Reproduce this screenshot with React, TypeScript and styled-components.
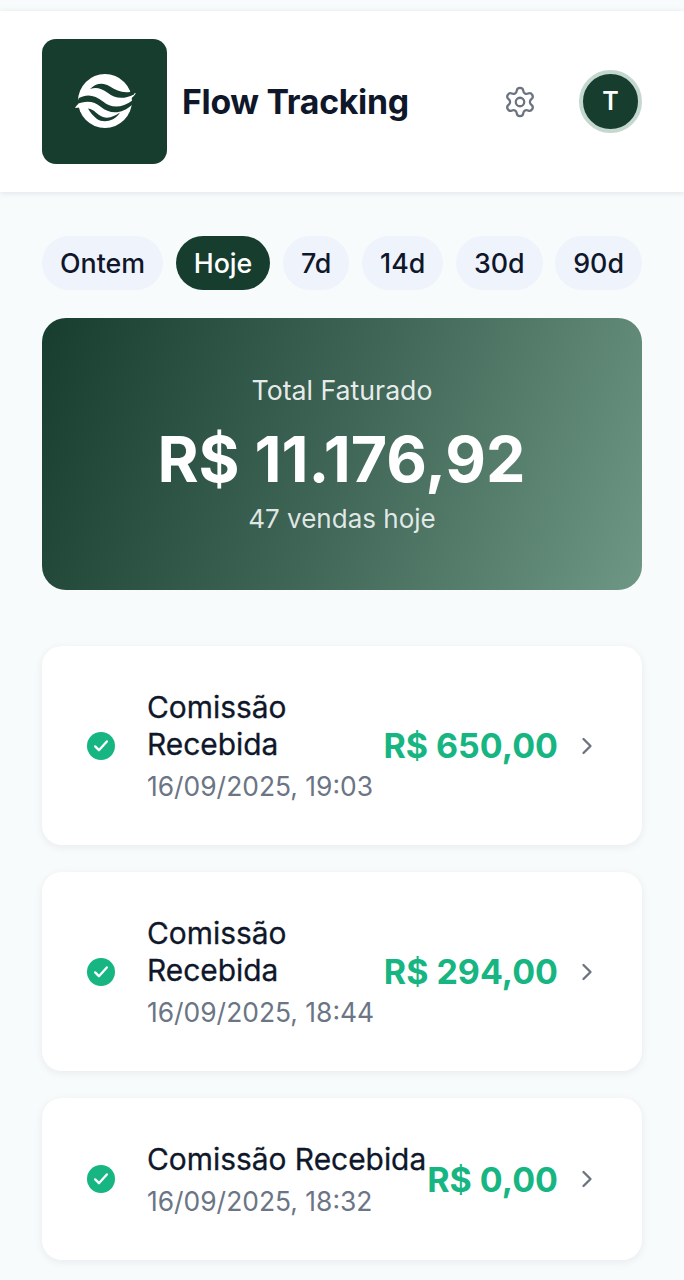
import React from "react";
import styled, { createGlobalStyle } from "styled-components";
import { Settings, ChevronRight } from "lucide-react";

const Global = createGlobalStyle`
  html, body { margin: 0; padding: 0; background: #f8fbfc; }
  body { font-family: Inter, "Liberation Sans", sans-serif; -webkit-font-smoothing: antialiased; }
`;

const Page = styled.div`
  width: 684px;
  height: 1280px;
  overflow: hidden;
  padding-top: 11px;
  box-sizing: border-box;
  background: #f8fbfc;
`;

const Header = styled.header`
  height: 181px;
  box-sizing: border-box;
  padding: 28px 42px 28px;
  background: #fff;
  display: flex;
  align-items: center;
  box-shadow: 0 1px 6px rgba(15, 23, 42, 0.1);
`;

const LogoTile = styled.div`
  width: 125px;
  height: 125px;
  border-radius: 14px;
  background: #163d2e;
  display: flex;
  align-items: center;
  justify-content: center;
  flex: none;
`;

const Brand = styled.h1`
  margin: 0 0 0 15px;
  font-size: 33.8px;
  line-height: 40px;
  font-weight: 700;
  letter-spacing: -0.3px;
  color: #0f172a;
  flex: 1;
`;

const GearButton = styled.div`
  width: 34px;
  height: 34px;
  display: flex;
  align-items: center;
  justify-content: center;
  color: #6b7280;
  margin-right: 42px;
`;

const Avatar = styled.div`
  width: 55px;
  height: 55px;
  border-radius: 50%;
  background: #163d2e;
  border: 4px solid #c5d8cf;
  color: #fff;
  font-size: 25px;
  font-weight: 600;
  display: flex;
  align-items: center;
  justify-content: center;
  flex: none;
  margin-top: -1px;
`;

const Main = styled.main`
  padding: 44px 42px 0;
`;

const Pills = styled.div`
  display: flex;
  justify-content: space-between;
`;

const Pill = styled.div<{ $active?: boolean }>`
  height: 54px;
  padding: 0 18px;
  border-radius: 27px;
  display: flex;
  align-items: center;
  font-size: 26.8px;
  font-weight: 500;
  background: ${(p) => (p.$active ? "#163d2e" : "#eff3fc")};
  color: ${(p) => (p.$active ? "#fff" : "#0f172a")};
`;

const Hero = styled.section`
  margin-top: 28px;
  height: 272px;
  border-radius: 24px;
  background: linear-gradient(110deg, #163d2e 0%, #3f6656 50%, #6f9785 100%);
  color: #fff;
  display: flex;
  flex-direction: column;
  align-items: center;
  justify-content: center;
`;

const HeroLabel = styled.div`
  font-size: 26.7px;
  line-height: 32px;
  color: rgba(255, 255, 255, 0.9);
`;

const HeroValue = styled.div`
  font-size: 62.7px;
  line-height: 76px;
  font-weight: 700;
  margin-top: 15px;
  margin-left: -1px;
`;

const HeroSub = styled.div`
  font-size: 26px;
  line-height: 32px;
  color: rgba(255, 255, 255, 0.85);
  margin-top: 6px;
`;

const List = styled.div`
  margin-top: 56px;
  display: flex;
  flex-direction: column;
  gap: 27px;
`;

const Card = styled.article`
  box-sizing: border-box;
  padding: 43px 45px 38px 45px;
  background: #fff;
  border-radius: 20px;
  box-shadow: 0 2px 8px rgba(15, 23, 42, 0.07);
  display: flex;
  align-items: center;
`;

const StatusDot = styled.div`
  width: 28px;
  height: 28px;
  border-radius: 50%;
  background: #17b582;
  color: #fff;
  display: flex;
  align-items: center;
  justify-content: center;
  flex: none;
  margin-top: -5px;
`;

const Info = styled.div`
  margin-left: 32px;
  flex: 1;
  min-width: 0;
`;

const Title = styled.div`
  font-size: 29.9px;
  line-height: 37px;
  font-weight: 400;
  color: #0f172a;
  white-space: nowrap;
  -webkit-text-stroke: 0.3px #0f172a;
`;

const DateText = styled.div`
  font-size: 26.4px;
  line-height: 41px;
  margin-top: 3px;
  color: #6b7585;
  white-space: nowrap;
`;

const Amount = styled.div`
  font-size: 34px;
  font-weight: 700;
  color: #17b582;
  white-space: nowrap;
  margin-top: -5px;
`;

const Chevron = styled.div`
  width: 28px;
  margin-left: 15px;
  margin-right: -4px;
  margin-top: -5px;
  display: flex;
  justify-content: center;
  color: #6b7280;
`;

const Logo = () => (
  <svg width="80" height="80" viewBox="0 0 80 80" aria-label="logo">
    <circle cx="40" cy="39" r="27" fill="#fff" />
    <path d="M10 46 C14 39 22 36 30 40 L20 45 Z" fill="#fff" />
    <path d="M71 31 C66 39 58 41 50 38 L62 34 Z" fill="#fff" />
    <path d="M25 27 C31 21 38 20 45 24.5 C52 29 59 32 69 29 L69 32.5 C57 38.5 49 35.5 43 31 C36 26 31 25 25 27 Z" fill="#163d2e" />
    <path d="M14 36 C22 31.5 30 33 38 39.5 C46 46 56 47 68 38 L68 42 C56 53.5 44 51.5 36 45 C29 39 21 38 11 42.5 Z" fill="#163d2e" />
    <path d="M23 46.5 C30 47.5 32 53 38 55 C44 57 50 54 55 50.5 C49 60 38 61 32 57 C28 54 25 50 23 46.5 Z" fill="#163d2e" />
  </svg>
);

const Check = () => (
  <svg width="20" height="20" viewBox="0 0 24 24" fill="none" stroke="currentColor" strokeWidth="2.8" strokeLinecap="round" strokeLinejoin="round">
    <path d="M5 12.5l4.5 4.5L19 6.5" />
  </svg>
);

const rows = [
  { lines: ["Comissão", "Recebida"], date: "16/09/2025, 19:03", value: "R$ 650,00" },
  { lines: ["Comissão", "Recebida"], date: "16/09/2025, 18:44", value: "R$ 294,00" },
  { lines: ["Comissão Recebida"], date: "16/09/2025, 18:32", value: "R$ 0,00" },
];

const pills = ["Ontem", "Hoje", "7d", "14d", "30d", "90d"];

export default function App() {
  return (
    <Page>
      <Global />
      <Header>
        <LogoTile>
          <Logo />
        </LogoTile>
        <Brand>Flow Tracking</Brand>
        <GearButton>
          <Settings size={34} strokeWidth={1.6} />
        </GearButton>
        <Avatar>T</Avatar>
      </Header>
      <Main>
        <Pills>
          {pills.map((p) => (
            <Pill key={p} $active={p === "Hoje"}>
              {p}
            </Pill>
          ))}
        </Pills>
        <Hero>
          <HeroLabel>Total Faturado</HeroLabel>
          <HeroValue>R$ 11.176,92</HeroValue>
          <HeroSub>47 vendas hoje</HeroSub>
        </Hero>
        <List>
          {rows.map((r) => (
            <Card key={r.date}>
              <StatusDot>
                <Check />
              </StatusDot>
              <Info>
                {r.lines.map((l) => (
                  <Title key={l}>{l}</Title>
                ))}
                <DateText>{r.date}</DateText>
              </Info>
              <Amount>{r.value}</Amount>
              <Chevron>
                <ChevronRight size={28} strokeWidth={2} />
              </Chevron>
            </Card>
          ))}
        </List>
      </Main>
    </Page>
  );
}
